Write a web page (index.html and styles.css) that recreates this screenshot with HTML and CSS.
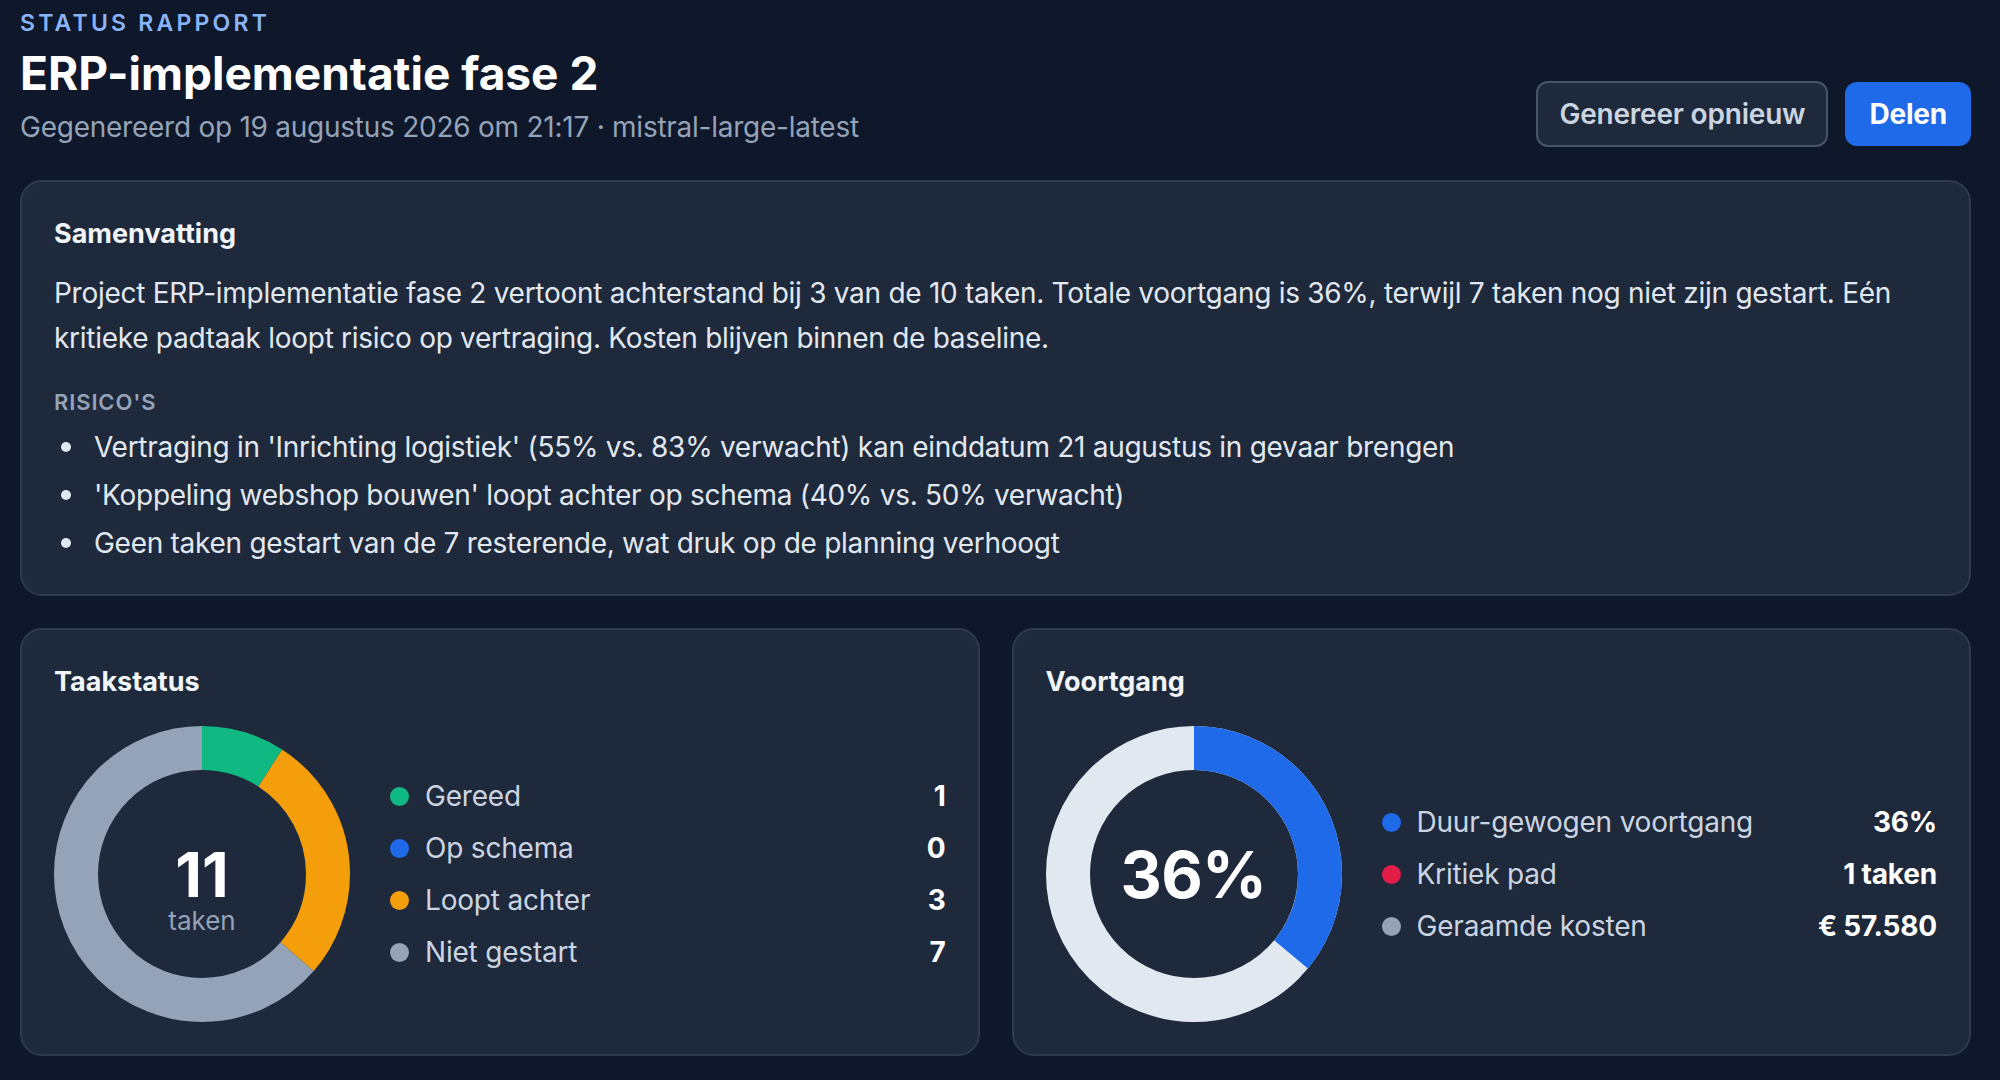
FILE: index.html
```html
<!DOCTYPE html>
<html lang="nl">
<head>
<meta charset="utf-8">
<title>Status rapport – ERP-implementatie fase 2</title>
<link rel="stylesheet" href="styles.css">
</head>
<body>
<div class="page">
  <header class="header">
    <div class="titles">
      <div class="eyebrow">STATUS RAPPORT</div>
      <h1 class="title">ERP-implementatie fase 2</h1>
      <div class="meta">Gegenereerd op 19 augustus 2026 om 21:17 · mistral-large-latest</div>
    </div>
    <div class="actions">
      <button class="btn btn-secondary">Genereer opnieuw</button>
      <button class="btn btn-primary">Delen</button>
    </div>
  </header>

  <section class="card summary">
    <h2 class="card-title">Samenvatting</h2>
    <p class="summary-text">Project ERP-implementatie fase 2 vertoont achterstand bij 3 van de 10 taken. Totale voortgang is 36%, terwijl 7 taken nog niet zijn gestart. Eén kritieke padtaak loopt risico op vertraging. Kosten blijven binnen de baseline.</p>
    <div class="section-label">RISICO'S</div>
    <ul class="risks">
      <li>Vertraging in 'Inrichting logistiek' (55% vs. 83% verwacht) kan einddatum 21 augustus in gevaar brengen</li>
      <li>'Koppeling webshop bouwen' loopt achter op schema (40% vs. 50% verwacht)</li>
      <li>Geen taken gestart van de 7 resterende, wat druk op de planning verhoogt</li>
    </ul>
  </section>

  <div class="grid">
    <section class="card chart-card">
      <h2 class="card-title">Taakstatus</h2>
      <div class="chart-row">
        <div class="donut-wrap">
          <svg class="donut" width="296" height="296" viewBox="0 0 296 296">
            <g transform="rotate(-90 148 148)">
              <circle cx="148" cy="148" r="126" fill="none" stroke="#94a3b8" stroke-width="44"
                stroke-dasharray="503.80 791.68" stroke-dashoffset="-287.88"/>
              <circle cx="148" cy="148" r="126" fill="none" stroke="#f59e0b" stroke-width="44"
                stroke-dasharray="215.91 791.68" stroke-dashoffset="-71.97"/>
              <circle cx="148" cy="148" r="126" fill="none" stroke="#10b981" stroke-width="44"
                stroke-dasharray="71.97 791.68" stroke-dashoffset="0"/>
            </g>
          </svg>
          <div class="donut-center">
            <div class="donut-num">11</div>
            <div class="donut-sub">taken</div>
          </div>
        </div>
        <ul class="legend">
          <li><span class="dot dot-green"></span><span class="label">Gereed</span><span class="value">1</span></li>
          <li><span class="dot dot-blue"></span><span class="label">Op schema</span><span class="value">0</span></li>
          <li><span class="dot dot-orange"></span><span class="label">Loopt achter</span><span class="value">3</span></li>
          <li><span class="dot dot-gray"></span><span class="label">Niet gestart</span><span class="value">7</span></li>
        </ul>
      </div>
    </section>

    <section class="card chart-card">
      <h2 class="card-title">Voortgang</h2>
      <div class="chart-row">
        <div class="donut-wrap">
          <svg class="donut" width="296" height="296" viewBox="0 0 296 296">
            <g transform="rotate(-90 148 148)">
              <circle cx="148" cy="148" r="126" fill="none" stroke="#e2e8f0" stroke-width="44"/>
              <circle cx="148" cy="148" r="126" fill="none" stroke="#1f6ae8" stroke-width="44"
                stroke-dasharray="285.00 791.68" stroke-dashoffset="0"/>
            </g>
          </svg>
          <div class="donut-center">
            <div class="donut-pct">36%</div>
          </div>
        </div>
        <ul class="legend">
          <li><span class="dot dot-blue"></span><span class="label">Duur-gewogen voortgang</span><span class="value">36%</span></li>
          <li><span class="dot dot-red"></span><span class="label">Kritiek pad</span><span class="value">1 taken</span></li>
          <li><span class="dot dot-gray"></span><span class="label">Geraamde kosten</span><span class="value">€ 57.580</span></li>
        </ul>
      </div>
    </section>
  </div>
</div>
</body>
</html>
```

FILE: styles.css
```css
* { box-sizing: border-box; }

html, body {
  margin: 0;
  padding: 0;
  background: #0f172a;
}

body {
  font-family: Inter, "Noto Sans", "Liberation Sans", sans-serif;
  color: #e2e8f0;
}

.page {
  padding: 9px 29px 24px 20px;
}

.header {
  display: flex;
  align-items: flex-end;
  justify-content: space-between;
}

.titles {
  padding-bottom: 2px;
}

.eyebrow {
  font-size: 23px;
  line-height: 28px;
  font-weight: 600;
  letter-spacing: 0.14em;
  color: #8ab4f8;
}

.title {
  margin: 10px 0 0;
  font-size: 46px;
  line-height: 52px;
  font-weight: 700;
  letter-spacing: 0;
  color: #ffffff;
}

.meta {
  margin-top: 10px;
  font-size: 28px;
  line-height: 36px;
  letter-spacing: -0.25px;
  color: #94a3b8;
}

.actions {
  display: flex;
  align-items: center;
  gap: 17px;
}

.btn {
  font-family: inherit;
  font-size: 28px;
  font-weight: 600;
  border-radius: 12px;
  cursor: pointer;
  letter-spacing: -0.2px;
}

.btn-secondary {
  height: 66px;
  padding: 0 21px;
  background: #1e293b;
  color: #cbd5e1;
  border: 2px solid #475569;
}

.btn-primary {
  height: 64px;
  padding: 0 24px;
  background: #1f6ae8;
  color: #ffffff;
  border: none;
  font-weight: 700;
}

.card {
  background: #1e293b;
  border: 2px solid #2d3a4f;
  border-radius: 22px;
  padding: 32px;
}

.summary {
  margin-top: 33px;
  padding-bottom: 27px;
}

.card-title {
  margin: 0;
  font-size: 27px;
  line-height: 40px;
  font-weight: 700;
  color: #f1f5f9;
}

.summary-text {
  margin: 17px 0 0;
  font-size: 28px;
  line-height: 45px;
  letter-spacing: -0.28px;
  color: #e2e8f0;
}

.section-label {
  margin-top: 27px;
  font-size: 22px;
  line-height: 28px;
  font-weight: 600;
  letter-spacing: 0.04em;
  color: #94a3b8;
}

.risks {
  margin: 7px 0 0;
  padding-left: 7px;
  list-style: none;
  font-size: 28px;
  line-height: 48px;
  letter-spacing: -0.28px;
  color: #e2e8f0;
}

.risks li {
  display: flex;
  align-items: center;
}

.risks li::before {
  content: "";
  flex: none;
  width: 10px;
  height: 10px;
  border-radius: 50%;
  background: #e2e8f0;
  margin-right: 23px;
}

.grid {
  margin-top: 32px;
  display: grid;
  grid-template-columns: 1fr 1fr;
  gap: 32px;
}

.chart-row {
  margin-top: 24px;
  display: flex;
  align-items: center;
  gap: 40px;
}

.donut-wrap {
  flex: none;
  display: grid;
  width: 296px;
  height: 296px;
}

.donut,
.donut-center {
  grid-area: 1 / 1;
}

.donut {
  display: block;
}

.donut-center {
  align-self: start;
  padding-top: 126px;
  display: flex;
  flex-direction: column;
  align-items: center;
  text-align: center;
}

.donut-num {
  font-size: 62px;
  line-height: 46px;
  font-weight: 700;
  color: #ffffff;
}

.donut-sub {
  margin-top: 13px;
  font-size: 26px;
  line-height: 20px;
  color: #94a3b8;
}

.donut-pct {
  font-size: 64px;
  line-height: 46px;
  font-weight: 700;
  color: #ffffff;
  letter-spacing: -0.01em;
}

.legend {
  flex: 1;
  list-style: none;
  margin: 0;
  padding: 0;
}

.legend li {
  display: flex;
  align-items: center;
  height: 52px;
  font-size: 28px;
  letter-spacing: -0.2px;
}

.dot {
  flex: none;
  width: 19px;
  height: 19px;
  border-radius: 50%;
  margin-right: 16px;
}

.dot-green { background: #10b981; }
.dot-blue { background: #1f6ae8; }
.dot-orange { background: #f59e0b; }
.dot-gray { background: #94a3b8; }
.dot-red { background: #e11d48; }

.label {
  flex: 1;
  color: #cbd5e1;
}

.value {
  font-weight: 700;
  color: #ffffff;
}
```
